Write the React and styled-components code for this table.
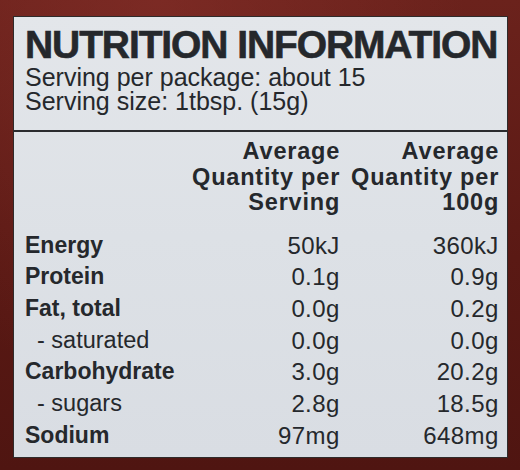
import React from 'react';
import styled, { createGlobalStyle } from 'styled-components';

const Global = createGlobalStyle`
  html, body { margin: 0; padding: 0; }
  body {
    width: 520px;
    height: 470px;
    overflow: hidden;
    font-family: "Liberation Sans", Arial, Helvetica, sans-serif;
    background: #5e1b16;
  }
`;

const Page = styled.div`
  box-sizing: border-box;
  width: 520px;
  height: 470px;
  padding: 16px 14px 12px 13px;
  display: flex;
  background:
    radial-gradient(ellipse at 30% 0%, rgba(140, 50, 44, 0.5), rgba(0,0,0,0) 60%),
    linear-gradient(180deg, #6b221c 0%, #5a1914 55%, #4f1511 100%);
`;

const Label = styled.section`
  flex: 1;
  display: flex;
  flex-direction: column;
  background: linear-gradient(180deg, #e3e6ea 0%, #dde1e6 50%, #d9dde3 100%);
  border: 1px solid #2f2b2b;
  color: #25282c;
`;

const Head = styled.header`
  padding: 8px 10px 17px 11px;
  border-bottom: 2px solid #2b2c2f;
`;

const Title = styled.h1`
  margin: 0;
  font-size: 39px;
  line-height: 40px;
  font-weight: 700;
  letter-spacing: -1.1px;
  -webkit-text-stroke: 0.6px #25282c;
  white-space: nowrap;
`;

const Info = styled.p`
  margin: 0;
  font-size: 25px;
  line-height: 24px;
  font-weight: 400;
  white-space: nowrap;
`;

const Table = styled.div`
  display: grid;
  grid-template-columns: 1fr 160px 159px;
  padding: 7px 9px 0 11px;
`;

const HeadCell = styled.div`
  grid-column: ${(p) => p.$col};
  text-align: right;
  font-size: 23.5px;
  line-height: 25.5px;
  font-weight: 700;
  letter-spacing: 0.8px;
  margin-right: -0.8px;
  margin-bottom: 14px;
  white-space: nowrap;
`;

const Line = styled.span`
  display: block;
`;

const Name = styled.div`
  grid-column: 1;
  font-size: ${(p) => (p.$sub ? '23.5px' : '23px')};
  line-height: 31.7px;
  font-weight: ${(p) => (p.$sub ? 400 : 700)};
  padding-left: ${(p) => (p.$sub ? '12px' : '0')};
  white-space: nowrap;
`;

const Value = styled.div`
  text-align: right;
  font-size: 24px;
  line-height: 31.7px;
  font-weight: 400;
  letter-spacing: 0.4px;
  margin-right: -0.4px;
  white-space: nowrap;
`;

const rows = [
  { name: 'Energy', serve: '50kJ', per100: '360kJ' },
  { name: 'Protein', serve: '0.1g', per100: '0.9g' },
  { name: 'Fat, total', serve: '0.0g', per100: '0.2g' },
  { name: '- saturated', serve: '0.0g', per100: '0.0g', sub: true },
  { name: 'Carbohydrate', serve: '3.0g', per100: '20.2g' },
  { name: '- sugars', serve: '2.8g', per100: '18.5g', sub: true },
  { name: 'Sodium', serve: '97mg', per100: '648mg' },
];

export default function App() {
  return (
    <>
      <Global />
      <Page>
        <Label>
          <Head>
            <Title>NUTRITION INFORMATION</Title>
            <Info>Serving per package: about 15</Info>
            <Info>Serving size: 1tbsp. (15g)</Info>
          </Head>
          <Table>
            <HeadCell $col={2}>
              <Line>Average</Line>
              <Line>Quantity per</Line>
              <Line>Serving</Line>
            </HeadCell>
            <HeadCell $col={3}>
              <Line>Average</Line>
              <Line>Quantity per</Line>
              <Line>100g</Line>
            </HeadCell>
            {rows.map((r) => (
              <React.Fragment key={r.name}>
                <Name $sub={r.sub}>{r.name}</Name>
                <Value>{r.serve}</Value>
                <Value>{r.per100}</Value>
              </React.Fragment>
            ))}
          </Table>
        </Label>
      </Page>
    </>
  );
}
